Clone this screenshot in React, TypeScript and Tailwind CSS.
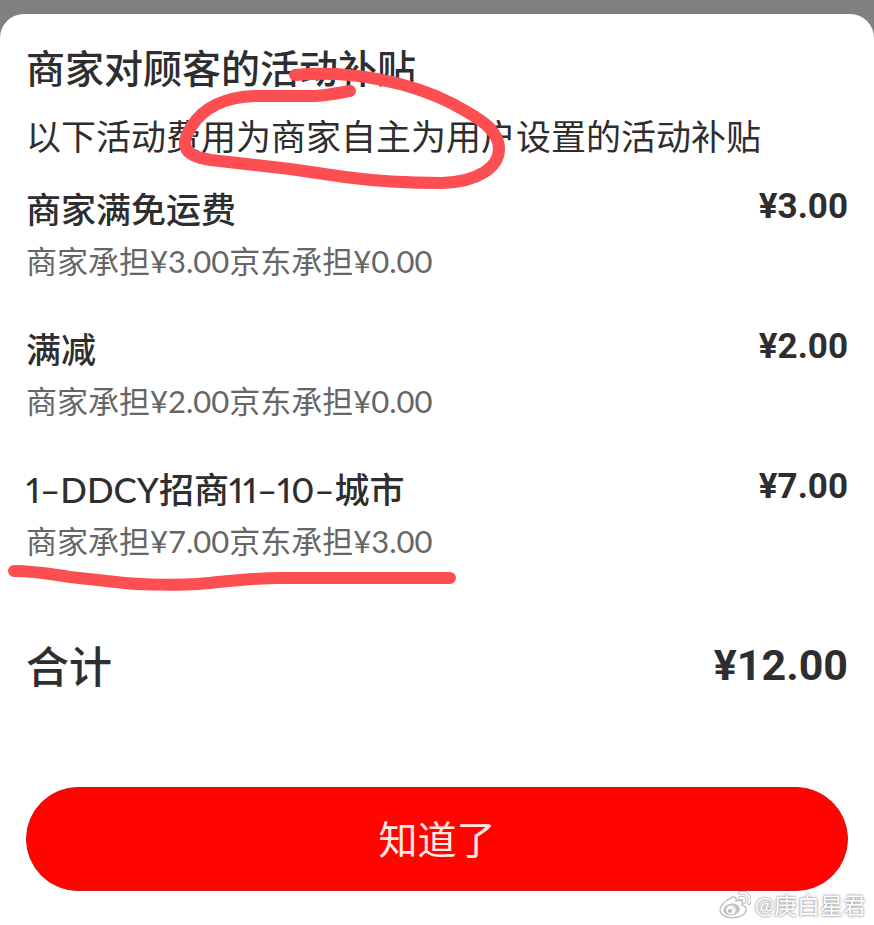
interface Discount {
  name: string;
  merchant: string;
  platform: string;
  amount: string;
}

const discounts: Discount[] = [
  { name: '商家满免运费', merchant: '3.00', platform: '0.00', amount: '3.00' },
  { name: '满减', merchant: '2.00', platform: '0.00', amount: '2.00' },
  { name: '1–DDCY招商11–10–城市', merchant: '7.00', platform: '3.00', amount: '7.00' },
];

function CircleMark() {
  return (
    <svg
      className="absolute left-0 top-0 pointer-events-none"
      width="520"
      height="200"
      viewBox="0 14 520 200"
      fill="none"
      stroke="#fd4f52"
      strokeWidth="12"
      strokeLinecap="round"
      strokeLinejoin="round"
      aria-hidden="true"
    >
      <path d="M350 91C338 93 328 95 316 96H255C224 97 203 108 191 127C179 146 184 156 211 160L290 169L345 177C382 182 414 183 442 183C478 182 499 167 499 149C499 128 475 116 453 104C410 82 352 70 295 75" />
    </svg>
  );
}

function UnderlineMark() {
  return (
    <svg
      className="absolute -left-5 top-full -mt-1 pointer-events-none"
      width="456"
      height="36"
      viewBox="6 557 456 36"
      fill="none"
      stroke="#fd4f52"
      strokeWidth="12"
      strokeLinecap="round"
      aria-hidden="true"
    >
      <path d="M14 571C35 571 50 574 70 577L125 583C145 585 180 585 198 584C225 582 245 578 280 578H450" />
    </svg>
  );
}

function WeiboLogo() {
  return (
    <svg className="w-8 h-7" viewBox="0 0 32 28" fill="none" aria-hidden="true">
      <path
        d="M12 7C15 5 18 6 17 10C22 8 25 10 23 14C29 16 28 22 22 25C15 28 5 27 2 22C-1 17 5 10 12 7Z"
        fill="#fff"
        stroke="#c4c4c4"
        strokeWidth="1.6"
      />
      <ellipse cx="12.5" cy="18.5" rx="8.5" ry="6" transform="rotate(-8 12.5 18.5)" fill="#c4c4c4" />
      <circle cx="12" cy="19" r="4.6" fill="#fff" />
      <circle cx="11" cy="20" r="2" fill="#b5b5b5" />
      <circle cx="14.2" cy="17.8" r="0.8" fill="#b5b5b5" />
      <path d="M21 2C27 0 32 6 30 12M21 7C24 6 26 8 25 11" stroke="#c4c4c4" strokeWidth="4" strokeLinecap="round" />
      <path d="M21 2C27 0 32 6 30 12M21 7C24 6 26 8 25 11" stroke="#fff" strokeWidth="2" strokeLinecap="round" />
    </svg>
  );
}

export default function App() {
  return (
    <div className="min-h-screen flex flex-col bg-[#808080] pt-3.5 font-['Lato','Noto_Sans_CJK_SC',sans-serif] text-[#2e2e2e]">
      <main className="relative flex-1 rounded-t-3xl bg-white px-[26px] pt-[26px] pb-8">
        <h1 className="text-[39px] leading-14 font-medium">商家对顾客的活动补贴</h1>
        <p className="mt-4 text-[35px] leading-12">以下活动费用为商家自主为用户设置的活动补贴</p>

        <ul className="mt-[25px] flex flex-col gap-11">
          {discounts.map((item, index) => (
            <li key={item.name}>
              <div className="flex items-start justify-between">
                <h2 className="text-[35px] leading-12 font-medium proportional-nums">{item.name}</h2>
                <span className="font-['Roboto',sans-serif] text-[35px] leading-11 font-bold">¥{item.amount}</span>
              </div>
              <div className="relative mt-2">
                <p className="text-[31px] leading-10 text-[#666]">
                  商家承担¥{item.merchant}京东承担¥{item.platform}
                </p>
                {index === discounts.length - 1 && <UnderlineMark />}
              </div>
            </li>
          ))}
        </ul>

        <div className="mt-[74px] flex items-start justify-between">
          <span className="text-[43px] leading-16 font-medium">合计</span>
          <span className="font-['Roboto',sans-serif] text-[43px] leading-15 font-bold">¥12.00</span>
        </div>

        <button
          type="button"
          className="mt-22 block h-26 w-full rounded-full border border-[#d01818] bg-[#ff0500] text-[39px] text-[#ffe9e4]"
        >
          知道了
        </button>

        <CircleMark />

        <div className="absolute bottom-1 right-2 flex items-center gap-1 text-[23px] leading-8 text-white [text-shadow:0_0_2px_#999,0_0_3px_#999]">
          <WeiboLogo />
          <span>@庚白星君</span>
        </div>
      </main>
    </div>
  );
}
